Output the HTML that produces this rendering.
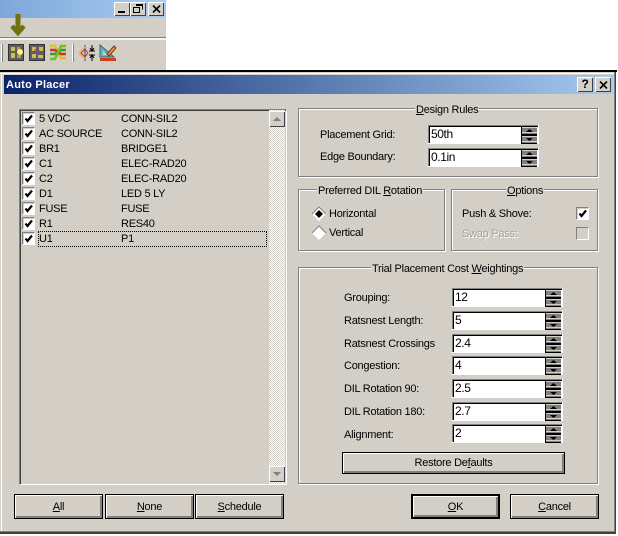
<!DOCTYPE html>
<html><head><meta charset="utf-8"><title>Auto Placer</title>
<style>
html,body{margin:0;padding:0;background:#fff}
body{width:618px;height:536px;position:relative;overflow:hidden;font-family:"Liberation Sans",sans-serif;font-size:11px;letter-spacing:-.25px;color:#000}
.a,.t,.g,.b,.i,.c{position:absolute;box-sizing:border-box}
.t{white-space:nowrap;line-height:14px;height:14px}
.g{border:1px solid #808080;box-shadow:1px 1px 0 #fff,inset 1px 1px 0 #fff}
.gt{position:absolute;top:-6px;background:#d4d0c8;padding:0 1px;line-height:14px;white-space:nowrap;height:14px}
.b{background:transparent;border:1px solid #000;box-shadow:inset 1px 1px 0 #fff,inset -1px -1px 0 #808080,inset -2px -2px 0 #808080;text-align:center;line-height:25px}
.i{background:#fff;border:1px solid #fff;border-top-color:#d4d0c8;border-left-color:#d4d0c8;box-shadow:inset 1px 1px 0 #808080,inset 2px 2px 0 #000;padding:2px 0 0 3px;line-height:15px;font-size:12px;letter-spacing:-.4px}
.i svg{position:absolute;right:1px;top:1px}
.c{width:13px;height:13px;background:#fff;border:1px solid #808080;border-right-color:#fff;border-bottom-color:#fff;outline:0;box-shadow:inset 1px 1px 0 #d4d0c8}
.c svg{position:absolute;left:0;top:0}
u{text-decoration:underline}
</style></head><body>
<svg width="0" height="0" style="position:absolute"><defs>
<pattern id="d" width="8" height="8" patternUnits="userSpaceOnUse"><rect width="8" height="8" fill="#d4d0c8"/><rect x="1" y="1" width="1" height="1" fill="#cbc8a8"/><rect x="5" y="3" width="1" height="1" fill="#cbc8a8"/><rect x="3" y="5" width="1" height="1" fill="#cbc8a8"/><rect x="7" y="7" width="1" height="1" fill="#cbc8a8"/></pattern>
<linearGradient id="tg"><stop offset="0" stop-color="#0a246a"/><stop offset="1" stop-color="#a6caf0"/></linearGradient>
<symbol id="sp" viewBox="0 0 16 18"><rect width="16" height="18" fill="#000"/><rect x="1" y="1" width="15" height="7" fill="#808080"/><rect x="1" y="1" width="15" height="1" fill="#d4d0c8"/><rect x="1" y="10" width="15" height="7" fill="#808080"/><rect x="1" y="10" width="15" height="1" fill="#d4d0c8"/><path d="M5 6h7L8.500 3z" fill="#000"/><path d="M5 12h7l-3.500 3z" fill="#000"/><rect x="1" y="6" width="15" height="1" fill="#d4d0c8"/><rect x="1" y="15" width="15" height="1" fill="#d4d0c8"/></symbol>
<symbol id="ck" viewBox="0 0 11 11"><path d="M2.500 5.500l2 2.500L9 2.500" fill="none" stroke="#000" stroke-width="2.200"/></symbol>
</defs></svg>

<!-- top window -->
<svg class="a" style="left:0;top:0" width="166" height="70" shape-rendering="crispEdges">
<rect width="166" height="70" fill="url(#d)"/>
<defs><linearGradient id="tt"><stop offset="0" stop-color="#7ea6d8"/><stop offset="1" stop-color="#a9cdf2"/></linearGradient></defs>
<rect width="166" height="18" fill="url(#tt)"/>
<rect y="37" width="166" height="1" fill="#808080"/><rect y="38" width="166" height="2" fill="#f4f4f0"/>
<rect x="1" y="44" width="1" height="18" fill="#fff"/><rect x="2" y="44" width="1" height="18" fill="#808080"/>
<rect x="72" y="44" width="1" height="18" fill="#fff"/><rect x="73" y="44" width="1" height="18" fill="#808080"/>
</svg>
<div class="a" style="left:114px;top:2px;width:16px;height:14px;background:#d4d0c8;box-shadow:inset 1px 1px 0 #fff,inset -1px -1px 0 #404040"></div>
<div class="a" style="left:118px;top:11px;width:7px;height:2px;background:#000"></div>
<div class="a" style="left:130px;top:2px;width:16px;height:14px;background:#d4d0c8;box-shadow:inset 1px 1px 0 #fff,inset -1px -1px 0 #404040"></div>
<svg class="a" style="left:133px;top:4px" width="10" height="9"><path d="M3 .5h6.500v5M.5 3.500h6v5h-6z M3 1.500h6.500" fill="none" stroke="#000"/></svg>
<div class="a" style="left:148px;top:2px;width:16px;height:14px;background:#d4d0c8;box-shadow:inset 1px 1px 0 #fff,inset -1px -1px 0 #404040"></div>
<svg class="a" style="left:152px;top:5px" width="9" height="8"><path d="M1 .5l7 7M8 .5l-7 7" stroke="#000" stroke-width="1.600"/></svg>
<svg class="a" style="left:9px;top:13px" width="20" height="24"><path d="M9 1v18" stroke="#72720e" stroke-width="5" fill="none"/><path d="M3 13l6 7 6-7" stroke="#72720e" stroke-width="4.500" fill="none"/></svg>
<svg class="a" style="left:8px;top:44px" width="110" height="18">
<rect x=".5" y=".5" width="15" height="16" fill="#5e5e5e" stroke="#333"/><rect x="3" y="3" width="4" height="4" fill="#c8c050"/><rect x="3" y="9" width="4" height="5" fill="#c8c050"/><path d="M9 3h3v3h-3z" fill="#a8a350"/><circle cx="12" cy="8" r="3" fill="#fff07a"/><rect x="9" y="11" width="4" height="3" fill="#a8a350"/>
<rect x="21.500" y=".5" width="15" height="16" fill="#5e5e5e" stroke="#333"/><rect x="24" y="3" width="4" height="4" fill="#c8c050"/><rect x="31" y="3" width="4" height="4" fill="#c8c050"/><rect x="24" y="10" width="4" height="4" fill="#c8c050"/><rect x="30" y="11" width="5" height="3" fill="#c8c050"/><path d="M27 5v4h6M29 7h3" stroke="#d03030" fill="none"/><path d="M26 8h5v3" stroke="#3060d0" fill="none"/>
<path d="M42 2h5l6 12h5" stroke="#e0c020" stroke-width="2.500" fill="none"/><path d="M42 6h5l6 4h5" stroke="#d03030" stroke-width="2.500" fill="none"/><path d="M42 10h5l6-4h5" stroke="#30a030" stroke-width="2.500" fill="none"/><path d="M42 15h5l6-13h5" stroke="#70c020" stroke-width="2.500" fill="none"/>
<path d="M77 1v16" stroke="#2040c0"/><path d="M71 9l6-6 M71 9l6 6" stroke="#d8c060" stroke-width="1.500"/><path d="M73 9l4-4 3 4-3 4z" fill="none" stroke="#d03030"/><path d="M84 1v6M81 7h6M82 4l2 3 2-3M84 11v6M81 11h6M82 14l2-3 2 3" stroke="#000" fill="none"/>
<path d="M92 1v12h14z" fill="#6cb4b4" stroke="#2a6a7a"/><path d="M95 7v4h4z" fill="#d4d0c8"/><path d="M99 10l7-8 2 2-7 8z" fill="#e0a040" stroke="#803020"/><rect x="92" y="14" width="16" height="3" fill="#d04020"/>
</svg>

<!-- dialog -->
<div class="a" style="left:0;top:70px;width:617px;height:2px;background:#000"></div>
<div class="a" style="left:0;top:72px;width:616px;height:462px;background:#d4d0c8"></div>
<svg class="a" style="left:0;top:72px" width="617" height="463" shape-rendering="crispEdges">
<rect width="615" height="461" fill="url(#d)"/>
<rect y="0" width="615" height="1" fill="#d4d0c8"/><rect y="1" width="615" height="1" fill="#fff"/>
<rect x="1" y="1" width="1" height="460" fill="#fff"/>
<rect x="614" y="0" width="1" height="461" fill="#808080"/><rect x="615" y="0" width="1" height="462" fill="#404040"/>
<rect y="459" width="615" height="1" fill="#808080"/><rect y="460" width="616" height="2" fill="#404040"/>
<rect x="4" y="3" width="609" height="19" fill="url(#tg)"/>
</svg>
<div class="t" style="left:6px;top:78px;color:#fff;font-weight:bold;font-size:11px;letter-spacing:.25px">Auto Placer</div>
<div class="a" style="left:577px;top:77px;width:16px;height:15px;background:#d4d0c8;box-shadow:inset 1px 1px 0 #fff,inset -1px -1px 0 #404040;font-weight:bold;font-size:12px;text-align:center;line-height:15px">?</div>
<div class="a" style="left:595px;top:77px;width:16px;height:15px;background:#d4d0c8;box-shadow:inset 1px 1px 0 #fff,inset -1px -1px 0 #404040"></div>
<svg class="a" style="left:599px;top:81px" width="9" height="8"><path d="M1 .5l7 7M8 .5l-7 7" stroke="#000" stroke-width="1.600"/></svg>

<!-- list -->
<div class="a" style="left:19px;top:109px;width:268px;height:376px;border:1px solid #fff;border-top-color:#808080;border-left-color:#808080;box-shadow:inset 1px 1px 0 #404040"></div>
<div class="a" style="left:269px;top:110px;width:16px;height:374px;background-color:#f0efea;background-image:repeating-conic-gradient(#d4d0c8 0 25%,#fff 0 50%);background-size:2px 2px"></div>
<div class="a" style="left:269px;top:111px;width:16px;height:16px;background:#d4d0c8;box-shadow:inset 1px 1px 0 #fff,inset -1px -1px 0 #404040"></div>
<svg class="a" style="left:273px;top:116px" width="9" height="6"><path d="M0 5h8L4 1z" fill="#808080"/></svg>
<div class="a" style="left:269px;top:466px;width:16px;height:16px;background:#d4d0c8;box-shadow:inset 1px 1px 0 #fff,inset -1px -1px 0 #404040"></div>
<svg class="a" style="left:273px;top:471px" width="9" height="6"><path d="M0 1h8L4 5z" fill="#808080"/></svg>

<div class="c" style="left:22px;top:112px"><svg width="11" height="11"><use href="#ck"/></svg></div><div class="t" style="left:39px;top:112px">5 VDC</div><div class="t" style="left:121px;top:112px">CONN-SIL2</div>
<div class="c" style="left:22px;top:127px"><svg width="11" height="11"><use href="#ck"/></svg></div><div class="t" style="left:39px;top:127px">AC SOURCE</div><div class="t" style="left:121px;top:127px">CONN-SIL2</div>
<div class="c" style="left:22px;top:142px"><svg width="11" height="11"><use href="#ck"/></svg></div><div class="t" style="left:39px;top:142px">BR1</div><div class="t" style="left:121px;top:142px">BRIDGE1</div>
<div class="c" style="left:22px;top:157px"><svg width="11" height="11"><use href="#ck"/></svg></div><div class="t" style="left:39px;top:157px">C1</div><div class="t" style="left:121px;top:157px">ELEC-RAD20</div>
<div class="c" style="left:22px;top:172px"><svg width="11" height="11"><use href="#ck"/></svg></div><div class="t" style="left:39px;top:172px">C2</div><div class="t" style="left:121px;top:172px">ELEC-RAD20</div>
<div class="c" style="left:22px;top:187px"><svg width="11" height="11"><use href="#ck"/></svg></div><div class="t" style="left:39px;top:187px">D1</div><div class="t" style="left:121px;top:187px">LED 5 LY</div>
<div class="c" style="left:22px;top:202px"><svg width="11" height="11"><use href="#ck"/></svg></div><div class="t" style="left:39px;top:202px">FUSE</div><div class="t" style="left:121px;top:202px">FUSE</div>
<div class="c" style="left:22px;top:217px"><svg width="11" height="11"><use href="#ck"/></svg></div><div class="t" style="left:39px;top:217px">R1</div><div class="t" style="left:121px;top:217px">RES40</div>
<div class="c" style="left:22px;top:232px"><svg width="11" height="11"><use href="#ck"/></svg></div><div class="t" style="left:39px;top:232px">U1</div><div class="t" style="left:121px;top:232px">P1</div>
<div class="a" style="left:38px;top:231px;width:229px;height:16px;border:1px dotted #000"></div>

<div class="b" style="left:14px;top:494px;width:89px;height:25px"><u>A</u>ll</div>
<div class="b" style="left:105px;top:494px;width:89px;height:25px"><u>N</u>one</div>
<div class="b" style="left:195px;top:494px;width:89px;height:25px"><u>S</u>chedule</div>

<!-- Design Rules -->
<div class="g" style="left:298px;top:108px;width:300px;height:69px"><span class="gt" style="left:116px"><u>D</u>esign Rules</span></div>
<div class="t" style="left:320px;top:128px">Placement Grid:</div>
<div class="i" style="left:427px;top:124px;width:112px;height:20px">50th<svg width="16" height="18"><use href="#sp"/></svg></div>
<div class="t" style="left:320px;top:150px">Edge Boundary:</div>
<div class="i" style="left:427px;top:147px;width:112px;height:20px">0.1in<svg width="16" height="18"><use href="#sp"/></svg></div>

<!-- DIL -->
<div class="g" style="left:298px;top:189px;width:147px;height:62px"><span class="gt" style="left:18px">Preferred DIL <u>R</u>otation</span></div>
<svg class="a" style="left:311px;top:206px" width="16" height="36"><path d="M8 1L1 8l7 7 7-7z" fill="#fff"/><path d="M1 8l7-7 7 7" fill="none" stroke="#808080"/><path d="M8 4L4 8l4 4 4-4z" fill="#000"/><path d="M8 20l-7 7 7 7 7-7z" fill="#fff"/><path d="M1 27l7-7 7 7" fill="none" stroke="#808080"/></svg>
<div class="t" style="left:329px;top:207px">Horizontal</div>
<div class="t" style="left:329px;top:226px">Vertical</div>

<!-- Options -->
<div class="g" style="left:451px;top:189px;width:147px;height:62px"><span class="gt" style="left:54px"><u>O</u>ptions</span></div>
<div class="t" style="left:462px;top:207px">Push &amp; Shove:</div>
<div class="c" style="left:576px;top:207px"><svg width="11" height="11"><use href="#ck"/></svg></div>
<div class="t" style="left:462px;top:227px;color:#a0a0a0;text-shadow:1px 1px 0 #fff">Swap Pass:</div>
<div class="a" style="left:576px;top:227px;width:13px;height:13px;border:1px solid #808080;border-right-color:#fff;border-bottom-color:#fff"></div>

<!-- Trial -->
<div class="g" style="left:298px;top:267px;width:300px;height:217px"><span class="gt" style="left:72px">Trial Placement Cost <u>W</u>eightings</span></div>
<div class="t" style="left:344px;top:291px">Grouping:</div>
<div class="i" style="left:451px;top:287px;width:112px;height:20px">12<svg width="16" height="18"><use href="#sp"/></svg></div>
<div class="t" style="left:344px;top:314px">Ratsnest Length:</div>
<div class="i" style="left:451px;top:310px;width:112px;height:20px">5<svg width="16" height="18"><use href="#sp"/></svg></div>
<div class="t" style="left:344px;top:337px">Ratsnest Crossings</div>
<div class="i" style="left:451px;top:333px;width:112px;height:20px">2.4<svg width="16" height="18"><use href="#sp"/></svg></div>
<div class="t" style="left:344px;top:359px">Congestion:</div>
<div class="i" style="left:451px;top:355px;width:112px;height:20px">4<svg width="16" height="18"><use href="#sp"/></svg></div>
<div class="t" style="left:344px;top:382px">DIL Rotation 90:</div>
<div class="i" style="left:451px;top:378px;width:112px;height:20px">2.5<svg width="16" height="18"><use href="#sp"/></svg></div>
<div class="t" style="left:344px;top:405px">DIL Rotation 180:</div>
<div class="i" style="left:451px;top:401px;width:112px;height:20px">2.7<svg width="16" height="18"><use href="#sp"/></svg></div>
<div class="t" style="left:344px;top:428px">Alignment:</div>
<div class="i" style="left:451px;top:423px;width:112px;height:20px">2<svg width="16" height="18"><use href="#sp"/></svg></div>
<div class="b" style="left:342px;top:452px;width:223px;height:22px;line-height:21px">Restore De<u>f</u>aults</div>

<div class="b" style="left:411px;top:494px;width:89px;height:25px;border:2px solid #000;line-height:23px"><u>O</u>K</div>
<div class="b" style="left:510px;top:494px;width:89px;height:25px"><u>C</u>ancel</div>
</body></html>
